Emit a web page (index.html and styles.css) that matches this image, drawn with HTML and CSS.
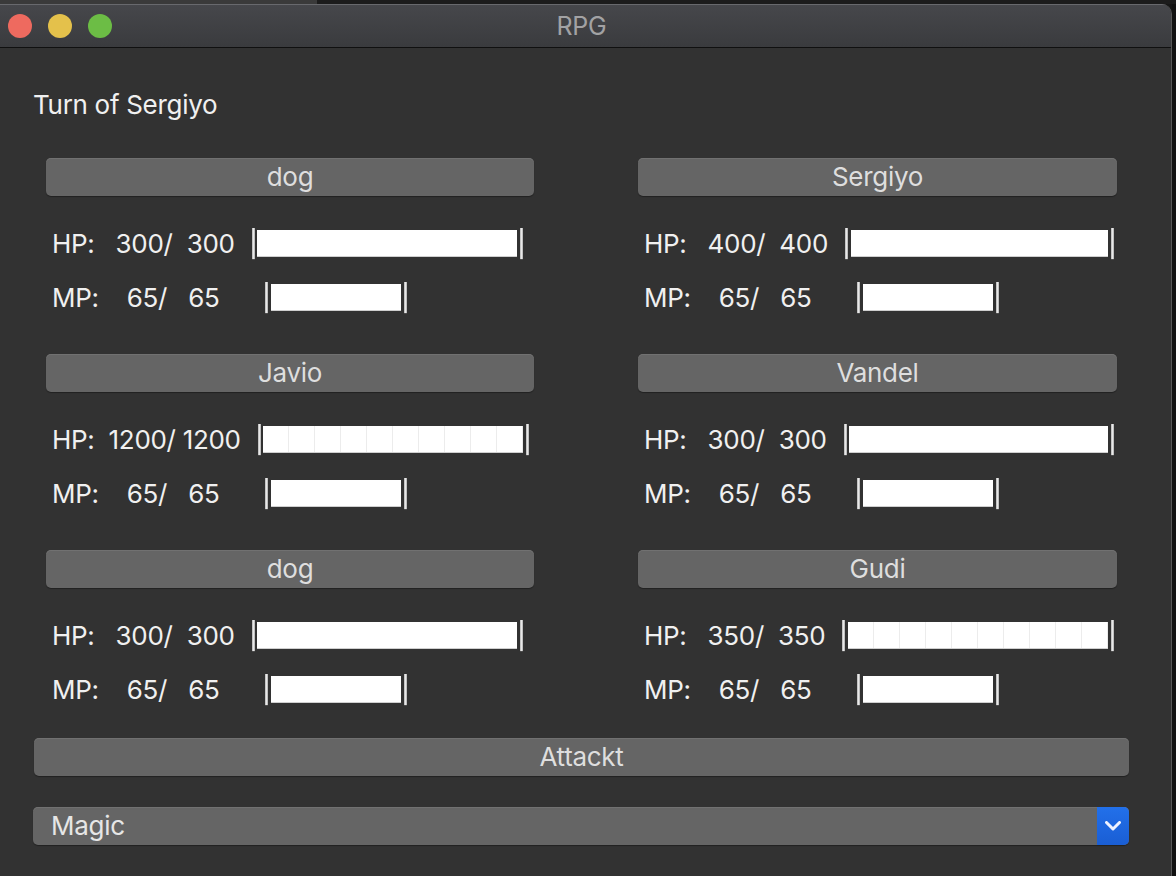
FILE: index.html
```html
<!DOCTYPE html>
<html lang="en">
<head>
<meta charset="utf-8">
<title>RPG</title>
<link rel="stylesheet" href="styles.css">
</head>
<body>
<div class="desktop"></div>
<div class="screen">
  <div class="window">
    <header class="titlebar">
      <div class="lights">
        <span class="light red"></span>
        <span class="light yellow"></span>
        <span class="light green"></span>
      </div>
      <div class="title">RPG</div>
      <div></div>
    </header>
    <main class="content">
      <div class="turn">Turn of Sergiyo</div>
      <div class="party">
        <section class="card">
          <div class="btn">dog</div>
          <div class="stats">
            <div class="stat"><span class="lbl">HP:</span><span class="val">   300/  300  </span><span class="pipe">|</span><span class="fill hp"></span><span class="pipe">|</span></div>
            <div class="stat"><span class="lbl">MP:</span><span class="val">    65/   65      </span><span class="pipe">|</span><span class="fill mp"></span><span class="pipe">|</span></div>
          </div>
        </section>
        <section class="card">
          <div class="btn">Sergiyo</div>
          <div class="stats">
            <div class="stat"><span class="lbl">HP:</span><span class="val">   400/  400  </span><span class="pipe">|</span><span class="fill hp"></span><span class="pipe">|</span></div>
            <div class="stat"><span class="lbl">MP:</span><span class="val">    65/   65      </span><span class="pipe">|</span><span class="fill mp"></span><span class="pipe">|</span></div>
          </div>
        </section>
        <section class="card">
          <div class="btn">Javio</div>
          <div class="stats">
            <div class="stat"><span class="lbl">HP:</span><span class="val">  1200/ 1200  </span><span class="pipe">|</span><span class="fill hp seg"></span><span class="pipe">|</span></div>
            <div class="stat"><span class="lbl">MP:</span><span class="val">    65/   65      </span><span class="pipe">|</span><span class="fill mp"></span><span class="pipe">|</span></div>
          </div>
        </section>
        <section class="card">
          <div class="btn">Vandel</div>
          <div class="stats">
            <div class="stat"><span class="lbl">HP:</span><span class="val">   300/  300  </span><span class="pipe">|</span><span class="fill hp"></span><span class="pipe">|</span></div>
            <div class="stat"><span class="lbl">MP:</span><span class="val">    65/   65      </span><span class="pipe">|</span><span class="fill mp"></span><span class="pipe">|</span></div>
          </div>
        </section>
        <section class="card">
          <div class="btn">dog</div>
          <div class="stats">
            <div class="stat"><span class="lbl">HP:</span><span class="val">   300/  300  </span><span class="pipe">|</span><span class="fill hp"></span><span class="pipe">|</span></div>
            <div class="stat"><span class="lbl">MP:</span><span class="val">    65/   65      </span><span class="pipe">|</span><span class="fill mp"></span><span class="pipe">|</span></div>
          </div>
        </section>
        <section class="card">
          <div class="btn">Gudi</div>
          <div class="stats">
            <div class="stat"><span class="lbl">HP:</span><span class="val">   350/  350  </span><span class="pipe">|</span><span class="fill hp seg"></span><span class="pipe">|</span></div>
            <div class="stat"><span class="lbl">MP:</span><span class="val">    65/   65      </span><span class="pipe">|</span><span class="fill mp"></span><span class="pipe">|</span></div>
          </div>
        </section>
      </div>
      <div class="btn attack">Attackt</div>
      <div class="select">
        <span class="select-text">Magic</span>
        <span class="select-arrow">
          <svg width="16" height="10" viewBox="0 0 16 10"><path d="M1.5 1.5 L8 8 L14.5 1.5" fill="none" stroke="#eef2ff" stroke-width="3" stroke-linecap="round" stroke-linejoin="round"/></svg>
        </span>
      </div>
    </main>
  </div>
  <div class="edge"></div>
</div>
</body>
</html>
```
FILE: styles.css
```css
* { box-sizing: border-box; }
html, body { margin: 0; padding: 0; }
body {
  width: 1176px;
  height: 876px;
  overflow: hidden;
  background: #161616;
  font-family: Inter, "Noto Sans", sans-serif;
}
.desktop {
  height: 4px;
  background: linear-gradient(to right, #3a3a3a 0 317px, #1c1c1c 317px);
}
.screen {
  display: flex;
  height: 872px;
}
.window {
  width: 1172px;
  height: 872px;
  background: #323232;
  border-top-right-radius: 10px;
  border-right: 1px solid #575757;
  overflow: hidden;
  display: flex;
  flex-direction: column;
}
.edge { flex: 1; background: #121212; }
.titlebar {
  height: 44px;
  flex: none;
  background: linear-gradient(#46474b, #3a3b3e);
  border-top: 1px solid #68696d;
  border-bottom: 1px solid #101010;
  display: grid;
  grid-template-columns: 1fr auto 1fr;
  align-items: center;
}
.lights { display: flex; gap: 16px; padding-left: 8px; }
.light { width: 24px; height: 24px; border-radius: 50%; }
.red { background: #ee6a5f; }
.yellow { background: #e4c14b; }
.green { background: #6cbd45; }
.title {
  color: #a2a2a4;
  font-size: 25px;
  letter-spacing: -0.2px;
  padding-right: 8px;
}
.content {
  flex: 1;
  padding: 41px 42px 0 33px;
  color: #f0f0f0;
  font-size: 26px;
  letter-spacing: -0.3px;
}
.turn { line-height: 32px; height: 32px; }
.party {
  display: grid;
  grid-template-columns: 488px 479px;
  column-gap: 104px;
  row-gap: 30px;
  margin: 37px 0 0 13px;
}
.btn {
  height: 38px;
  line-height: 38px;
  background: #656565;
  border-radius: 5px;
  color: #dedede;
  text-align: center;
  box-shadow: inset 0 1px 0 #717171, 0 1px 1px rgba(0, 0, 0, 0.35);
}
.stats { margin-top: 20px; padding-left: 6px; }
.stat {
  height: 54px;
  display: flex;
  align-items: center;
  white-space: pre;
}
.pipe {
  display: inline-block;
  color: #e8e8e8;
  font-weight: 500;
  will-change: transform;
}
.fill {
  display: inline-block;
  height: 27px;
  background: #ffffff;
  border-bottom: 1px solid #cfcfcf;
}
.fill.hp { width: 260px; }
.fill.mp { width: 130px; margin-left: 1px; }
.fill.seg {
  background: repeating-linear-gradient(to right, #ffffff 0 25px, #ececec 25px 26px);
}
.attack { margin: 22px 0 0 1px; }
.select {
  margin-top: 31px;
  height: 38px;
  display: flex;
  align-items: stretch;
  background: #656565;
  border-radius: 5px;
  box-shadow: inset 0 1px 0 #717171, 0 1px 1px rgba(0, 0, 0, 0.35);
  overflow: hidden;
}
.select-text {
  flex: 1;
  padding-left: 18px;
  line-height: 38px;
  color: #e6e6e6;
}
.select-arrow {
  width: 32px;
  display: flex;
  align-items: center;
  justify-content: center;
  background: linear-gradient(#2270ea, #1a5ed4);
}
```
